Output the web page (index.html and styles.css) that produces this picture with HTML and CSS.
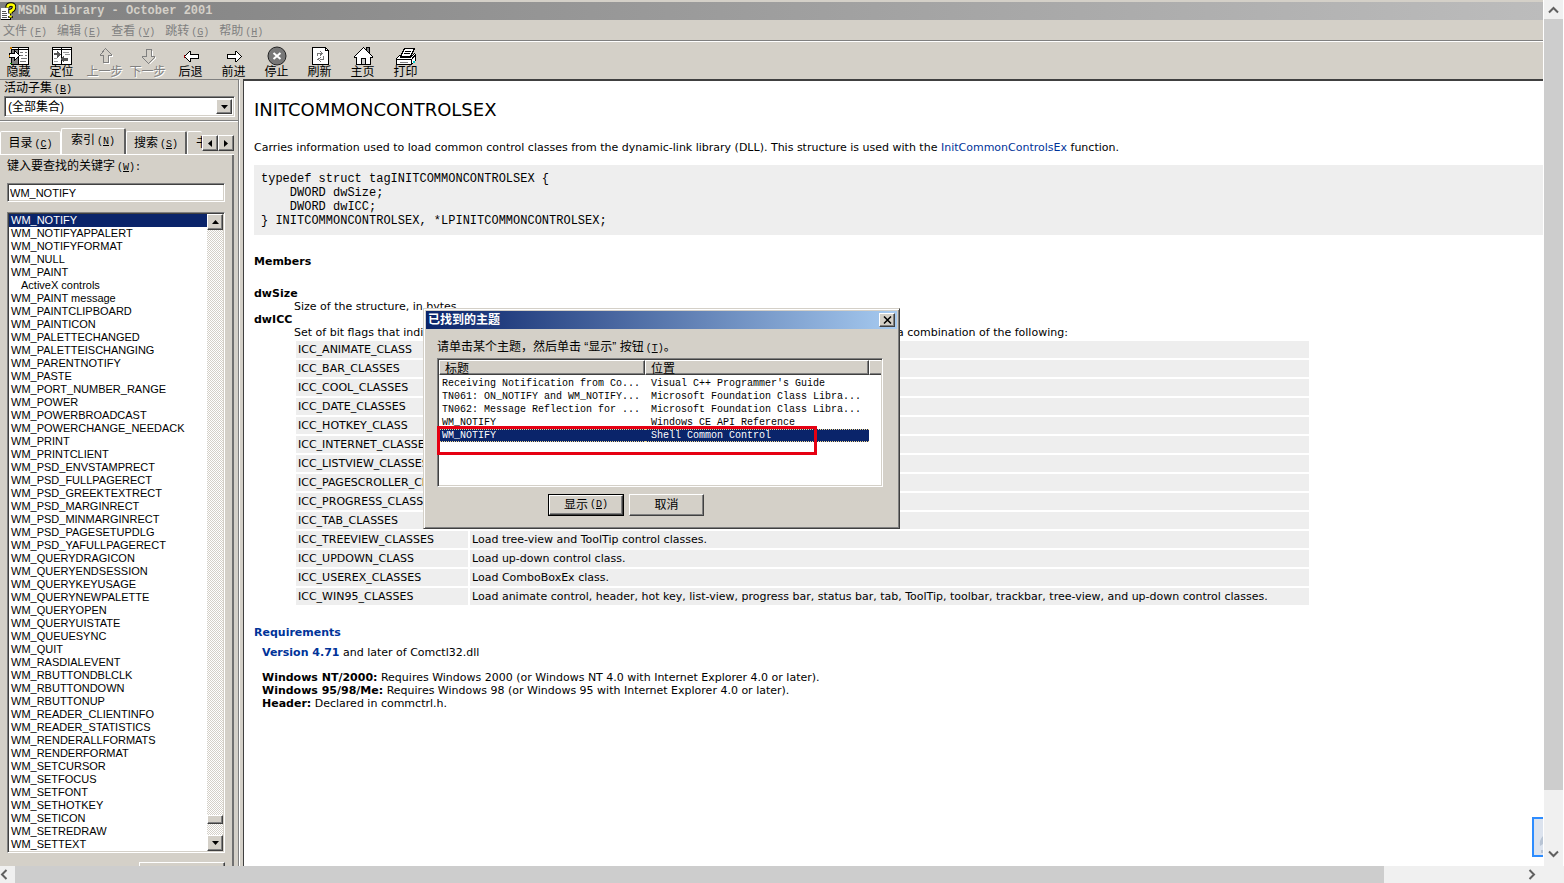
FILE: index.html
```html
<!DOCTYPE html>
<html lang="zh-CN">
<head>
<meta charset="utf-8">
<title>MSDN Library - October 2001</title>
<link rel="stylesheet" href="styles.css">
</head>
<body>
<div class="viewer">
  <div class="app">
    <header class="titlebar">
      <svg class="app-icon" width="16" height="18" viewBox="0 0 16 18">
        <path d="M1 6h6l3 3v9H1z" fill="#fff" shape-rendering="crispEdges"/>
        <path d="M1 17.500h10M10.500 10v8" stroke="#000" shape-rendering="crispEdges"/>
        <path d="M2 9.500h4M2 11.500h5M2 13.500h5M2 15.500h5" stroke="#555" shape-rendering="crispEdges"/>
        <path d="M7.500 5.500q0-3 3.500-3t3 3-3.500 3.500v2.500M10.500 14v2" fill="none" stroke="#000" stroke-width="4.500"/>
        <path d="M7.500 5.500q0-3 3.500-3t3 3-3.500 3.500v2.500M10.500 13.500v2" fill="none" stroke="#ff0" stroke-width="2.500"/>
      </svg>
      <h1 class="title">MSDN Library - October 2001</h1>
    </header>
    <nav class="menubar">
      <button class="menu">文件<span class="key">(<u>F</u>)</span></button>
      <button class="menu">编辑<span class="key">(<u>E</u>)</span></button>
      <button class="menu">查看<span class="key">(<u>V</u>)</span></button>
      <button class="menu">跳转<span class="key">(<u>G</u>)</span></button>
      <button class="menu">帮助<span class="key">(<u>H</u>)</span></button>
    </nav>
    <div class="toolbar">
      <button class="tool">
        <svg width="22" height="20" viewBox="0 0 22 20" shape-rendering="crispEdges">
          <path d="M3.500 1.500h17v17h-17z" fill="#fff" stroke="#000"/><path d="M4 4h6v14H4z" fill="#808080"/><path d="M4 3.500h16M10.500 2v16" stroke="#000"/>
          <path d="M12 6.500h3M17 6.500h2M12 9.500h3M17 9.500h2M13 12.500h6M12 15.500h6" stroke="#777"/>
          <path d="M1.500 7.500h5v-3l5 5-5 5v-3h-5z" fill="#fff" stroke="#000"/>
          <path d="M2 1h2v2H2zM1 9h1v2H1z" fill="#d08000"/><path d="M2 17h2v1H2z" fill="#080"/>
        </svg>
        <span>隐藏</span>
      </button>
      <button class="tool">
        <svg width="22" height="20" viewBox="0 0 22 20" shape-rendering="crispEdges">
          <path d="M1.500 1.500h19v17h-19z" fill="#fff" stroke="#000"/><path d="M2 3.500h18M10.500 2v16" stroke="#000"/>
          <path d="M3 7h3V5l4 3-4 4V9H3zM17 12h-4v-2l-4 3 4 4v-2h4z" fill="#555"/>
          <path d="M12 6.500h6M14 8.500h5M3 12.500h3M3 15.500h4" stroke="#999"/>
        </svg>
        <span>定位</span>
      </button>
      <button class="tool" disabled>
        <svg width="22" height="20" viewBox="0 0 22 20" shape-rendering="crispEdges">
          <path d="M12.500 3.500l6 6v1h-3v7h-5v-7" fill="none" stroke="#fff"/>
          <path d="M11.500 2.500l6 6v1h-3v7h-5v-7h-3v-1z" fill="#d4d0c8" stroke="#808080"/>
        </svg>
        <span>上一步</span>
      </button>
      <button class="tool" disabled>
        <svg width="22" height="20" viewBox="0 0 22 20" shape-rendering="crispEdges">
          <path d="M15.500 4.500v7h3v1l-6 6" fill="none" stroke="#fff"/>
          <path d="M9.500 3.500h5v7h3v1l-6 6-6-6v-1h4z" fill="#d4d0c8" stroke="#808080"/>
        </svg>
        <span>下一步</span>
      </button>
      <button class="tool">
        <svg width="22" height="20" viewBox="0 0 22 20" shape-rendering="crispEdges">
          <path d="M18.500 8.500v4h-8v3h-1l-5-5 5-5h1v3z" fill="#fff" stroke="#000"/><path d="M4 9h1v3H4z" fill="#a00"/>
        </svg>
        <span>后退</span>
      </button>
      <button class="tool">
        <svg width="22" height="20" viewBox="0 0 22 20" shape-rendering="crispEdges">
          <path d="M4.500 8.500v4h8v3h1l5-5-5-5h-1v3z" fill="#fff" stroke="#000"/>
        </svg>
        <span>前进</span>
      </button>
      <button class="tool">
        <svg width="22" height="20" viewBox="0 0 22 20">
          <circle cx="11" cy="10" r="9" fill="#777" stroke="#222"/><path d="M7.500 7l7 6M14.500 7l-7 6" stroke="#fff" stroke-width="2"/>
        </svg>
        <span>停止</span>
      </button>
      <button class="tool">
        <svg width="22" height="20" viewBox="0 0 22 20" shape-rendering="crispEdges">
          <path d="M3.500 1.500h13l3 3v14h-16z" fill="#fff" stroke="#000"/><path d="M16.500 1.500v3h3" fill="none" stroke="#000"/>
          <path d="M8.500 10V7.500h4M11 5l2 2.500-2 2M14.500 10v3.500h-4M12 11l-3 2.500 3 2" fill="none" stroke="#777"/>
        </svg>
        <span>刷新</span>
      </button>
      <button class="tool">
        <svg width="22" height="20" viewBox="0 0 22 20" shape-rendering="crispEdges">
          <path d="M14.500 7V1.500h3V9" fill="#808080" stroke="#000"/>
          <path d="M4.500 18.500v-7h-2v-1l9-9 9 9v1h-2v7z" fill="#fff" stroke="#000"/><path d="M9.500 18v-5.500h4V18" fill="#ccc" stroke="#000"/>
        </svg>
        <span>主页</span>
      </button>
      <button class="tool">
        <svg width="22" height="20" viewBox="0 0 22 20" shape-rendering="crispEdges">
          <path d="M5.500 10.500l4-8h10l-4 8z" fill="#fff" stroke="#000"/><path d="M10 5.500h6M9 7.500h6" stroke="#000"/>
          <path d="M1.500 12.500l3-3h1v2h10l4-4 1 1v6l-4 4h-15z" fill="#fff" stroke="#000"/>
          <path d="M2 13.500h14M16.500 13v5M17 12.500l3-3" stroke="#000"/><path d="M5 16h8v1H5z" fill="#808080"/><path d="M18 15h2v2h-2z" fill="#0cc"/>
        </svg>
        <span>打印</span>
      </button>
    </div>

    <div class="main">
      <aside class="side">
        <section class="subset">
          <label for="subset">活动子集<span class="key">(<u>B</u>)</span></label>
          <div class="combo">
            <select id="subset"><option>(全部集合)</option></select>
            <span class="bevel combo-arrow"><svg width="7" height="4" viewBox="0 0 7 4"><path d="M0 0h7L3.500 4z"/></svg></span>
          </div>
        </section>
        <div class="tabs" role="tablist">
          <button class="tab" role="tab">目录<span class="key">(<u>C</u>)</span></button>
          <button class="tab tab-active" role="tab" aria-selected="true">索引<span class="key">(<u>N</u>)</span></button>
          <button class="tab" role="tab">搜索<span class="key">(<u>S</u>)</span></button>
          <button class="tab tab-cut" role="tab">书</button>
          <button class="bevel spin" aria-label="向左"><svg width="4" height="7" viewBox="0 0 4 7"><path d="M4 0v7L0 3.500z"/></svg></button>
          <button class="bevel spin" aria-label="向右"><svg width="4" height="7" viewBox="0 0 4 7"><path d="M0 0v7l4-3.500z"/></svg></button>
        </div>
        <section class="pane" role="tabpanel">
          <label for="keyword">键入要查找的关键字<span class="key">(<u>W</u>):</span></label>
          <input id="keyword" class="keyword" type="text" value="WM_NOTIFY">
          <div class="listbox">
            <ul class="items">
              <li class="selected">WM_NOTIFY</li><li>WM_NOTIFYAPPALERT</li><li>WM_NOTIFYFORMAT</li><li>WM_NULL</li><li>WM_PAINT</li><li class="sub">ActiveX controls</li><li>WM_PAINT message</li><li>WM_PAINTCLIPBOARD</li><li>WM_PAINTICON</li><li>WM_PALETTECHANGED</li><li>WM_PALETTEISCHANGING</li><li>WM_PARENTNOTIFY</li><li>WM_PASTE</li><li>WM_PORT_NUMBER_RANGE</li><li>WM_POWER</li><li>WM_POWERBROADCAST</li><li>WM_POWERCHANGE_NEEDACK</li><li>WM_PRINT</li><li>WM_PRINTCLIENT</li><li>WM_PSD_ENVSTAMPRECT</li><li>WM_PSD_FULLPAGERECT</li><li>WM_PSD_GREEKTEXTRECT</li><li>WM_PSD_MARGINRECT</li><li>WM_PSD_MINMARGINRECT</li><li>WM_PSD_PAGESETUPDLG</li><li>WM_PSD_YAFULLPAGERECT</li><li>WM_QUERYDRAGICON</li><li>WM_QUERYENDSESSION</li><li>WM_QUERYKEYUSAGE</li><li>WM_QUERYNEWPALETTE</li><li>WM_QUERYOPEN</li><li>WM_QUERYUISTATE</li><li>WM_QUEUESYNC</li><li>WM_QUIT</li><li>WM_RASDIALEVENT</li><li>WM_RBUTTONDBLCLK</li><li>WM_RBUTTONDOWN</li><li>WM_RBUTTONUP</li><li>WM_READER_CLIENTINFO</li><li>WM_READER_STATISTICS</li><li>WM_RENDERALLFORMATS</li><li>WM_RENDERFORMAT</li><li>WM_SETCURSOR</li><li>WM_SETFOCUS</li><li>WM_SETFONT</li><li>WM_SETHOTKEY</li><li>WM_SETICON</li><li>WM_SETREDRAW</li><li>WM_SETTEXT</li>
            </ul>
            <div class="list-scroll">
              <button class="bevel list-arrow" aria-label="向上"><svg width="7" height="4" viewBox="0 0 7 4"><path d="M0 4h7L3.500 0z"/></svg></button>
              <span class="bevel list-thumb"></span>
              <button class="bevel list-arrow" aria-label="向下"><svg width="7" height="4" viewBox="0 0 7 4"><path d="M0 0h7L3.500 4z"/></svg></button>
            </div>
          </div>
          <button class="bevel show-topic" aria-label="显示"></button>
        </section>
      </aside>

      <article class="doc">
        <h2 class="doc-title">INITCOMMONCONTROLSEX</h2>
        <p class="intro">Carries information used to load common control classes from the dynamic-link library (DLL). This structure is used with the <a href="#">InitCommonControlsEx</a> function.</p>
<pre class="code">typedef struct tagINITCOMMONCONTROLSEX {
    DWORD dwSize;
    DWORD dwICC;
} INITCOMMONCONTROLSEX, *LPINITCOMMONCONTROLSEX;</pre>
        <h3 class="members">Members</h3>
        <dl class="fields">
          <dt>dwSize</dt>
          <dd>Size of the structure, in bytes.</dd>
          <dt>dwICC</dt>
          <dd>Set of bit flags that indicate which common control classes will be loaded from the DLL. This member can be a combination of the following:
            <table class="flags">
              <colgroup><col class="flag-name"><col class="flag-text"></colgroup>
              <tr><td>ICC_ANIMATE_CLASS</td><td></td></tr>
              <tr><td>ICC_BAR_CLASSES</td><td></td></tr>
              <tr><td>ICC_COOL_CLASSES</td><td></td></tr>
              <tr><td>ICC_DATE_CLASSES</td><td></td></tr>
              <tr><td>ICC_HOTKEY_CLASS</td><td></td></tr>
              <tr><td>ICC_INTERNET_CLASSES</td><td></td></tr>
              <tr><td>ICC_LISTVIEW_CLASSES</td><td></td></tr>
              <tr><td>ICC_PAGESCROLLER_CLASS</td><td></td></tr>
              <tr><td>ICC_PROGRESS_CLASS</td><td></td></tr>
              <tr><td>ICC_TAB_CLASSES</td><td></td></tr>
              <tr><td>ICC_TREEVIEW_CLASSES</td><td>Load tree-view and ToolTip control classes.</td></tr>
              <tr><td>ICC_UPDOWN_CLASS</td><td>Load up-down control class.</td></tr>
              <tr><td>ICC_USEREX_CLASSES</td><td>Load ComboBoxEx class.</td></tr>
              <tr><td>ICC_WIN95_CLASSES</td><td>Load animate control, header, hot key, list-view, progress bar, status bar, tab, ToolTip, toolbar, trackbar, tree-view, and up-down control classes.</td></tr>
            </table>
          </dd>
        </dl>
        <h3 class="requirements">Requirements</h3>
        <div class="req">
          <p><a href="#"><b>Version 4.71</b></a> and later of Comctl32.dll</p>
          <p><b>Windows NT/2000:</b> Requires Windows 2000 (or Windows NT 4.0 with Internet Explorer 4.0 or later).<br>
          <b>Windows 95/98/Me:</b> Requires Windows 98 (or Windows 95 with Internet Explorer 4.0 or later).<br>
          <b>Header:</b> Declared in commctrl.h.</p>
        </div>
      </article>
    </div>

    <div class="dialog" role="dialog" aria-labelledby="dlg-title">
      <div class="dialog-bar">
        <h2 id="dlg-title" class="dialog-title">已找到的主题</h2>
        <button class="bevel close" aria-label="关闭"><svg width="9" height="8" viewBox="0 0 9 8"><path d="M1 0.500l7 7M8 0.500l-7 7" stroke="#000" stroke-width="1.500"/></svg></button>
      </div>
      <div class="dialog-body">
        <p class="prompt">请单击某个主题，然后单击 “显示” 按钮<span class="key">(<u>T</u>)</span>。</p>
        <div class="found">
          <table class="topics">
            <colgroup><col class="col-title"><col class="col-place"><col></colgroup>
            <thead><tr><th>标题</th><th>位置</th><th></th></tr></thead>
            <tbody>
              <tr><td>Receiving Notification from Co...</td><td>Visual C++ Programmer's Guide</td><td></td></tr>
              <tr><td>TN061: ON_NOTIFY and WM_NOTIFY...</td><td>Microsoft Foundation Class Libra...</td><td></td></tr>
              <tr><td>TN062: Message Reflection for ...</td><td>Microsoft Foundation Class Libra...</td><td></td></tr>
              <tr><td>WM_NOTIFY</td><td>Windows CE API Reference</td><td></td></tr>
              <tr class="picked"><td>WM_NOTIFY</td><td>Shell Common Control</td><td></td></tr>
            </tbody>
          </table>
          <div class="marker"></div>
        </div>
        <div class="actions">
          <button class="default"><span class="bevel push">显示<span class="key">(<u>D</u>)</span></span></button>
          <button class="bevel push">取消</button>
        </div>
      </div>
    </div>
    <div class="side-widget"><svg width="9" height="36" viewBox="0 0 9 36"><path d="M9 17q-4 4-3 10l3-2zM9 31h-2v3h2z" fill="#b8c4d4"/></svg></div>
  </div>

  <div class="vscroll">
    <button aria-label="向上滚动"><svg width="11" height="8" viewBox="0 0 11 8"><path d="M1 6.500l4.500-4.500L10 6.500"/></svg></button>
    <span class="vthumb"></span>
    <span class="vrest"></span>
    <button aria-label="向下滚动"><svg width="11" height="8" viewBox="0 0 11 8"><path d="M1 1.500L5.500 6 10 1.500"/></svg></button>
  </div>
  <div class="hscroll">
    <button aria-label="向左滚动"><svg width="8" height="11" viewBox="0 0 8 11"><path d="M6.500 1L2 5.500 6.500 10"/></svg></button>
    <span class="hthumb"></span>
    <span class="hrest"></span>
    <button aria-label="向右滚动"><svg width="8" height="11" viewBox="0 0 8 11"><path d="M1.500 1L6 5.500 1.500 10"/></svg></button>
  </div>
</div>
</body>
</html>
```

FILE: styles.css
```css
* { box-sizing: border-box; }

body {
  margin: 0;
  font: 12px/14px "Liberation Sans", "Noto Sans CJK SC", sans-serif;
  color: #000;
  background: #fff;
}

h1, h2, h3, p, ul, dl, dd, pre { margin: 0; }

button {
  margin: 0;
  padding: 0;
  border: 0;
  background: none;
  font: inherit;
  color: inherit;
}

svg { display: block; flex: none; }

.viewer {
  display: grid;
  grid-template-columns: minmax(0, 1fr) 20px;
  grid-template-rows: minmax(0, 1fr) 17px;
  height: 100vh;
  background: #f0f0f0;
}

.app {
  position: relative;
  display: flex;
  flex-direction: column;
  overflow: hidden;
  border-right: 1px solid #fff;
  background: #fff;
}

.key {
  margin-left: 2px;
  font-family: "Liberation Mono", monospace;
  font-size: 10px;
  line-height: 10px;
}

.bevel {
  display: flex;
  align-items: center;
  justify-content: center;
  background: #d4d0c8;
  border: 1px solid;
  border-color: #fff #404040 #404040 #fff;
  box-shadow: inset -1px -1px #808080;
}

/* Window chrome */
.titlebar {
  flex: none;
  display: flex;
  align-items: center;
  gap: 2px;
  height: 20px;
  border-top: 2px solid #d4d0c8;
  background: linear-gradient(90deg, #808080, #bcbcbc);
}
.title {
  font: bold 12px/18px "Liberation Mono", monospace;
  color: #d4d0c8;
}
.menubar {
  flex: none;
  display: flex;
  gap: 10px;
  height: 22px;
  padding: 1px 0 0 3px;
  background: #d4d0c8;
  border-bottom: 1px solid #fff;
  box-shadow: inset 0 -1px #808080;
}
.menu { color: #808080; height: 20px; white-space: nowrap; }
.toolbar {
  flex: none;
  display: flex;
  gap: 6px;
  height: 37px;
  padding-top: 4px;
  background: #d4d0c8;
}
.tool {
  display: flex;
  flex-direction: column;
  align-items: center;
  width: 37px;
  white-space: nowrap;
  line-height: 12px;
}
.tool:disabled { color: #808080; text-shadow: 1px 1px #fff; }

.main { flex: 1; min-height: 0; display: flex; background: #d4d0c8; }

/* Navigation pane */
.side {
  flex: none;
  display: flex;
  flex-direction: column;
  width: 240px;
  margin-right: 3px;
  overflow: hidden;
  border-top: 1px solid #808080;
  border-right: 1px solid #fff;
  box-shadow: inset -1px 0 #808080;
}
.side label { height: 14px; white-space: nowrap; }
.subset {
  flex: none;
  display: flex;
  flex-direction: column;
  gap: 1px;
  margin-right: 1px;
  padding: 1px 3px 4px 4px;
  border-bottom: 1px solid #fff;
  box-shadow: inset 0 -1px #808080;
}
.combo, .keyword, .listbox, .found {
  border: 1px solid;
  border-color: #808080 #fff #fff #808080;
  background: #fff;
  box-shadow: inset 1px 1px #404040, inset -1px -1px #d4d0c8;
}
.combo { display: flex; height: 21px; padding: 2px; }
.combo select {
  flex: 1;
  appearance: none;
  padding: 0 1px;
  border: 0;
  background: transparent;
  font: inherit;
  color: #000;
}
.combo-arrow { width: 16px; }

.tabs {
  flex: none;
  display: flex;
  align-items: flex-end;
  height: 32px;
  margin-right: 5px;
}
.tab {
  width: 61px;
  height: 23px;
  white-space: nowrap;
  border: 1px solid #fff;
  border-right: 2px solid #606060;
  border-bottom: 0;
  border-radius: 2px 2px 0 0;
}
.tab:first-child { border-right: 1px solid #fff; }
.tab-active {
  width: 65px;
  height: 26px;
  padding-bottom: 4px;
}
.tab-cut {
  flex: 1;
  min-width: 0;
  overflow: hidden;
  border-right: 0;
  padding-left: 8px;
  text-align: left;
}
.spin { width: 16px; height: 16px; margin-bottom: 3px; }

.pane {
  flex: 1;
  display: flex;
  flex-direction: column;
  margin-right: 5px;
  padding: 4px 9px 0 7px;
  border-top: 1px solid #fff;
  box-shadow: inset -2px 0 #707070;
}
.keyword {
  flex: none;
  width: 100%;
  height: 19px;
  margin: 10px 0;
  padding: 0 2px;
  border-radius: 0;
  font: 11px "Liberation Sans", sans-serif;
}
.listbox { flex: none; display: flex; padding: 1px; }
.items {
  flex: 1;
  padding: 0;
  list-style: none;
  font-size: 11px;
  line-height: 13px;
  white-space: nowrap;
}
.items li { padding-left: 2px; }
.items .sub { padding-left: 12px; }
.items .selected { background: #0a246a; color: #fff; }
.list-scroll {
  display: flex;
  flex-direction: column;
  width: 16px;
  background: repeating-conic-gradient(#d4d0c8 0 25%, #fff 0 50%) 0 0 / 2px 2px;
}
.list-arrow { height: 16px; }
.list-thumb { height: 9px; margin: auto 0 11px; }
.show-topic {
  flex: none;
  align-self: flex-end;
  width: 86px;
  height: 22px;
  margin-top: 9px;
}

/* Topic text */
.doc {
  flex: 1;
  min-width: 0;
  overflow: hidden;
  padding: 19px 0 0 10px;
  border-top: 2px solid #404040;
  border-left: 1px solid #404040;
  background: #fff;
  font: 11px/13px "DejaVu Sans", sans-serif;
}
.doc a, .requirements { color: #039; text-decoration: none; }
.doc h3 { font-size: 11px; line-height: 13px; }
.doc-title { font-size: 18px; font-weight: normal; line-height: 20px; }
.intro { margin: 21px 0 11px; }
.code {
  padding: 7px;
  background: #eee;
  font: 12px/14px "Liberation Mono", monospace;
}
.members { margin: 20px 0 19px; }
.fields dt { font-weight: bold; }
.fields dd { margin-left: 40px; white-space: nowrap; }
.flags { border-spacing: 2px; }
.flags td { height: 17px; padding: 2px; background: #eee; }
.flag-name { width: 172px; }
.flag-text { width: 839px; }
.requirements { margin: 19px 0 7px; }
.req { padding-left: 8px; }
.req p { margin-bottom: 12px; }

/* Topics Found dialog */
.dialog {
  position: absolute;
  left: 423px;
  top: 308px;
  width: 477px;
  padding: 2px;
  border: 1px solid;
  border-color: #d4d0c8 #404040 #404040 #d4d0c8;
  background: #d4d0c8;
  box-shadow: inset 1px 1px #fff, inset -1px -1px #808080;
}
.dialog-bar {
  display: flex;
  align-items: center;
  justify-content: space-between;
  height: 18px;
  padding: 0 2px;
  background: linear-gradient(90deg, #0a246a, #a6caf0);
}
.dialog-title { font-size: 12px; line-height: 18px; color: #fff; }
.close { width: 16px; height: 14px; }
.dialog-body { padding: 11px 14px 10px 11px; }
.prompt { height: 14px; margin-bottom: 4px; white-space: nowrap; }
.found { position: relative; height: 129px; padding: 1px; }
.topics {
  width: 100%;
  table-layout: fixed;
  border-collapse: separate;
  border-spacing: 0;
  font: 10px/13px "Liberation Mono", monospace;
  white-space: nowrap;
}
.col-title { width: 206px; }
.col-place { width: 224px; }
.topics th {
  height: 15px;
  padding: 0 5px;
  background: #d4d0c8;
  border: 1px solid;
  border-color: #fff #404040 #404040 #fff;
  box-shadow: inset -1px -1px #808080;
  font: 12px/13px "Noto Sans CJK SC", sans-serif;
  text-align: left;
}
.topics th:last-child { border-right: 0; box-shadow: inset 0 -1px #808080; }
.topics td { height: 13px; padding: 0 0 0 3px; }
.topics td:nth-child(2) { padding-left: 6px; }
.topics tbody tr:first-child td { height: 15px; padding-top: 2px; }
.picked td:not(:last-child) {
  background: #0a246a;
  color: #fff;
  border: dotted #f0d890;
  border-width: 1px 0;
  line-height: 11px;
}
.marker {
  position: absolute;
  left: -1px;
  top: 67px;
  width: 380px;
  height: 29px;
  border: 3px solid #e60012;
}
.actions {
  display: flex;
  justify-content: center;
  gap: 5px;
  margin-top: 7px;
  padding-right: 68px;
}
.default { border: 1px solid #000; }
.push { width: 75px; height: 22px; }
.default .push { width: 74px; height: 20px; }

/* Docked widget at the right edge */
.side-widget {
  position: absolute;
  right: 0;
  bottom: 9px;
  width: 11px;
  height: 40px;
  border: 2px solid #2d8cff;
  border-right: 0;
  background: #dce3ee;
}

/* Outer scrollbars */
.vscroll, .hscroll { display: flex; }
.vscroll { flex-direction: column; border-right: 1px solid #fff; }
.hscroll { grid-column: 1; }
.vscroll button, .hscroll button {
  flex: none;
  display: flex;
  align-items: center;
  justify-content: center;
}
.vscroll button { height: 19px; }
.vscroll button:last-child { height: 24px; }
.hscroll button { width: 15px; }
.hscroll button:first-child { justify-content: flex-start; }
.hscroll button:last-child { width: 24px; }
.vthumb, .hthumb { background: #cdcdcd; }
.vthumb { flex: 771; }
.vrest { flex: 52; }
.hthumb { flex: 1369; }
.hrest { flex: 136; }
.vscroll path, .hscroll path { fill: none; stroke: #606060; stroke-width: 2; }
```
